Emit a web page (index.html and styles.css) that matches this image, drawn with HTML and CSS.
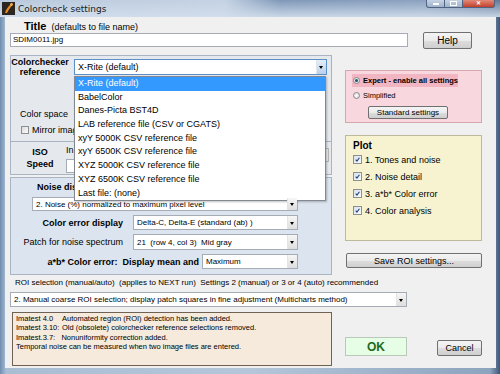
FILE: index.html
```html
<!DOCTYPE html>
<html lang="en">
<head>
    <meta charset="UTF-8">
    <title>Colorcheck settings</title>
    <link rel="stylesheet" href="styles.css">
</head>
<body>
<div class="window">
    <div class="titlebar">
        <svg class="app-icon" viewBox="0 0 13 13" width="13" height="13">
            <rect width="13" height="13" fill="#2b2620"/>
            <path d="M3 11 C4 7 6 5 9 2 L10.5 3 C8 6 6.5 8 5 11 Z" fill="#e88a2a"/>
            <circle cx="9.5" cy="2.5" r="1.4" fill="#f4b04a"/>
        </svg>
        <span class="win-title">Colorcheck settings</span>
        <div class="win-buttons">
            <span class="wbtn wbtn-min"></span>
            <span class="wbtn wbtn-max"></span>
            <span class="wbtn wbtn-close">&#x2715;</span>
        </div>
    </div>

    <div class="client">
        <div class="title-row"><b>Title</b>&nbsp; (defaults to file name)</div>
        <div class="file-row">
            <div class="text-input">SDIM0011.jpg</div>
            <div class="button help-btn">Help</div>
        </div>

        <div class="main">
            <div class="left">
                <!-- colorchecker reference + dropdown opened -->
                <div class="cc-panel">
                    <div class="cc-head">
                        <div class="cc-label">Colorchecker<br>reference</div>
                        <div class="combo combo-open cc-combo">
                            <span class="combo-text">X-Rite (default)</span>
                            <span class="combo-arrow"></span>
                        </div>
                    </div>
                    <div class="cs-label">Color space</div>
                    <div class="mirror"><span class="check-empty"></span>Mirror imag</div>
                    <div class="iso">
                        <div class="iso-label">ISO<br>Speed</div>
                        <div class="iso-in">
                            <div class="iso-in-label">In</div>
                            <div class="iso-box"></div>
                        </div>
                        <div class="iso-side"></div>
                    </div>

                    <ul class="dropdown">
                        <li class="selected">X-Rite (default)</li>
                        <li>BabelColor</li>
                        <li>Danes-Picta BST4D</li>
                        <li>LAB reference file (CSV or CGATS)</li>
                        <li>xyY 5000K CSV reference file</li>
                        <li>xyY 6500K CSV reference file</li>
                        <li>XYZ 5000K CSV reference file</li>
                        <li>XYZ 6500K CSV reference file</li>
                        <li>Last file: (none)</li>
                    </ul>
                </div>

                <div class="noise-panel">
                    <div class="nd-label">Noise disp</div>
                    <div class="combo nd-combo">
                        <span class="combo-text">2. Noise (%) normalized to maximum pixel level</span>
                        <span class="combo-arrow"></span>
                    </div>
                    <div class="field-row err-row">
                        <span class="field-label bold">Color error display</span>
                        <div class="combo wide-combo">
                            <span class="combo-text">Delta-C, Delta-E (standard (ab) )</span>
                            <span class="combo-arrow"></span>
                        </div>
                    </div>
                    <div class="field-row patch-row">
                        <span class="field-label">Patch for noise spectrum</span>
                        <div class="combo wide-combo">
                            <span class="combo-text">21&nbsp; (row 4, col 3)&nbsp; Mid gray</span>
                            <span class="combo-arrow"></span>
                        </div>
                    </div>
                    <div class="field-row ab-row">
                        <span class="field-label bold">a*b* Color error:&nbsp; Display mean and</span>
                        <div class="combo max-combo">
                            <span class="combo-text">Maximum</span>
                            <span class="combo-arrow"></span>
                        </div>
                    </div>
                </div>
            </div>

            <div class="right">
                <div class="mode-box">
                    <div class="mode-row expert"><span class="radio on"></span>Expert - enable all settings</div>
                    <div class="mode-row"><span class="radio"></span>Simplified</div>
                    <div class="button std-btn">Standard settings</div>
                </div>
                <div class="plot-box">
                    <div class="plot-title">Plot</div>
                    <div class="plot-row"><span class="check"><svg viewBox="0 0 9 9"><path d="M2.2 4.6 L3.8 6.6 L7 2.2" /></svg></span>1. Tones and noise</div>
                    <div class="plot-row"><span class="check"><svg viewBox="0 0 9 9"><path d="M2.2 4.6 L3.8 6.6 L7 2.2" /></svg></span>2. Noise detail</div>
                    <div class="plot-row"><span class="check"><svg viewBox="0 0 9 9"><path d="M2.2 4.6 L3.8 6.6 L7 2.2" /></svg></span>3. a*b* Color error</div>
                    <div class="plot-row"><span class="check"><svg viewBox="0 0 9 9"><path d="M2.2 4.6 L3.8 6.6 L7 2.2" /></svg></span>4. Color analysis</div>
                </div>
                <div class="button save-btn">Save ROI settings...</div>
            </div>
        </div>

        <div class="roi-label">ROI selection (manual/auto)  (applies to NEXT run)  Settings 2 (manual) or 3 or 4 (auto) recommended</div>
        <div class="combo roi-combo">
            <span class="combo-text">2. Manual coarse ROI selection; display patch squares in fine adjustment (Multicharts method)</span>
            <span class="combo-arrow"></span>
        </div>

        <div class="bottom">
            <div class="info">
                <div><span class="ver">Imatest 4.0</span>Automated region (ROI) detection has been added.</div>
                <div><span class="ver">Imatest 3.10:</span>Old (obsolete) colorchecker reference selections removed.</div>
                <div>Imatest.3.7:&nbsp;&nbsp; Nonuniformity correction added.</div>
                <div>Temporal noise can be measured when two image files are entered.</div>
            </div>
            <div class="ok-btn">OK</div>
            <div class="button cancel-btn">Cancel</div>
        </div>
    </div>
</div>
</body>
</html>
```

FILE: styles.css
```css
body {
    margin: 0;
    font-family: "Liberation Sans", Arial, sans-serif;
    color: #000;
}
.window {
    width: 500px;
    height: 374px;
    overflow: hidden;
    display: flex;
    flex-direction: column;
    background: linear-gradient(to right, #6f8db0 0, #a9bdd3 1.2%, #b5c6d9 50%, #8da4bf 98%, #3e5677 100%);
}
.titlebar {
    height: 17px;
    display: flex;
    align-items: center;
    position: relative;
    background:
        linear-gradient(to bottom, rgba(255,255,255,0) 0, rgba(210,222,236,0.9) 100%),
        linear-gradient(to right, #b9c9dc 0, #c4d2e3 45%, #7f98b8 56%, #8aa1bf 85%, #5f7797 100%);
}
.app-icon {
    margin-left: 2px;
    flex-shrink: 0;
}
.win-title {
    margin-left: 3px;
    font-family: "DejaVu Sans", sans-serif;
    font-size: 9px;
    color: #1a1a1a;
}
.win-buttons {
    position: absolute;
    top: 0;
    right: 5px;
    display: flex;
}
.wbtn {
    height: 8px;
    border: 1px solid #4f6380;
    border-top: none;
    box-sizing: border-box;
    background: linear-gradient(#c5d3e4, #9fb3cc);
    display: flex;
    align-items: center;
    justify-content: center;
}
.wbtn-min {
    width: 19px;
    border-radius: 0 0 0 3px;
}
.wbtn-min::after {
    content: "";
    width: 6px;
    height: 2px;
    background: #fff;
}
.wbtn-max {
    width: 18px;
    border-left: none;
}
.wbtn-max::after {
    content: "";
    width: 5px;
    height: 3px;
    border: 1px solid #fff;
}
.wbtn-close {
    width: 32px;
    border-left: none;
    border-radius: 0 0 3px 0;
    background: linear-gradient(#e28a78, #c1402b);
    color: #fff;
    font-size: 6px;
    font-weight: bold;
    line-height: 7px;
}

.client {
    margin: 0 4px 0 5px;
    height: 351px;
    background: #f0f0f0;
    font-size: 9px;
}
.title-row {
    margin: 4px 0 0 19px;
    height: 10px;
    line-height: 10px;
    font-size: 9px;
}
.title-row b {
    font-size: 11px;
}
.file-row {
    display: flex;
    margin-top: 1px;
    padding-left: 5px;
}
.text-input {
    width: 398px;
    height: 14px;
    margin-top: 1px;
    box-sizing: border-box;
    border: 1px solid #a5acb5;
    background: #fff;
    padding-left: 2px;
    font-size: 8px;
    line-height: 12px;
}
.button {
    box-sizing: border-box;
    border: 1px solid #707070;
    border-radius: 2px;
    background: linear-gradient(#f4f4f4 0, #ebebeb 50%, #dddddd 51%, #cfcfcf 100%);
    display: flex;
    align-items: center;
    justify-content: center;
}
.help-btn {
    margin-left: 15px;
    width: 49px;
    height: 17px;
    font-size: 10px;
}

.main {
    display: flex;
    margin-top: 6px;
    padding-left: 5px;
}
.left {
    width: 322px;
}
.right {
    width: 137px;
    margin-left: 13px;
}

/* dropdown-style combo box */
.combo {
    display: flex;
    box-sizing: border-box;
    border: 1px solid #a5acb5;
    background: #fff;
}
.combo-text {
    flex: 1;
    padding-left: 3px;
    white-space: nowrap;
    overflow: hidden;
    font-size: 8px;
    display: flex;
    align-items: center;
}
.combo-arrow {
    width: 9px;
    position: relative;
    background: linear-gradient(#f6f6f6, #dedede);
    border-left: 1px solid #e4e4e4;
}
.combo-arrow::after {
    content: "";
    position: absolute;
    left: 2px;
    top: 50%;
    margin-top: -1px;
    border-left: 2.5px solid transparent;
    border-right: 2.5px solid transparent;
    border-top: 3px solid #000;
}
.combo-open {
    border-color: #5a8fc8;
}
.combo-open .combo-arrow {
    background: linear-gradient(#e4eef9, #b9d1ec);
}

.cc-panel {
    position: relative;
    height: 120px;
    box-sizing: border-box;
    border: 1px solid #a9b4c3;
    background: #e5e8ed;
}
.cc-head {
    display: flex;
    margin-top: 3px;
}
.cc-label {
    width: 58px;
    margin-top: -2px;
    text-align: center;
    font-weight: bold;
    line-height: 10px;
}
.cc-combo {
    margin-left: 5px;
    width: 253px;
    height: 16px;
}
.cc-combo .combo-text {
    font-size: 9px;
}
.cs-label {
    margin-top: 32px;
    padding-left: 9px;
    line-height: 10px;
}
.mirror {
    display: flex;
    align-items: center;
    margin-top: 6px;
    padding-left: 10px;
    line-height: 10px;
}
.check-empty {
    width: 8px;
    height: 8px;
    box-sizing: border-box;
    border: 1px solid #8e8f8f;
    background: linear-gradient(135deg, #dcdcdc, #fafafa);
    margin-right: 3px;
}
.iso {
    display: flex;
    margin-top: 6px;
    border-top: 1px solid #a9b4c3;
    height: 35px;
}
.iso-label {
    width: 58px;
    margin-top: 4px;
    text-align: center;
    font-weight: bold;
    line-height: 12px;
}
.iso-in {
    margin-left: -3px;
}
.iso-in-label {
    margin-top: 3px;
    line-height: 10px;
}
.iso-box {
    margin-top: 4px;
    width: 60px;
    height: 12px;
    border: 1px solid #a5acb5;
    background: #fff;
}
.iso-side {
    margin: 6px 2px 0 auto;
    width: 24px;
    height: 12px;
    border: 1px solid #b5b5b5;
    background: #ececec;
}

.dropdown {
    position: absolute;
    left: 63px;
    top: 20px;
    width: 252px;
    margin: 0;
    padding: 0;
    list-style: none;
    box-sizing: border-box;
    border: 1px solid #828790;
    background: #fff;
    box-shadow: 1px 1px 2px rgba(0,0,0,0.25);
}
.dropdown li {
    height: 13.7px;
    line-height: 13.7px;
    padding-left: 3px;
    font-size: 9px;
    white-space: nowrap;
}
.dropdown li.selected {
    background: #3399ff;
    color: #fff;
}

.noise-panel {
    margin-top: 2px;
    height: 98px;
    box-sizing: border-box;
    border: 1px solid #a9b4c3;
    background: #dce5ef;
}
.nd-label {
    margin-top: 4px;
    padding-left: 26px;
    line-height: 10px;
    font-weight: bold;
}
.nd-combo {
    margin: 5px 0 0 21px;
    width: 266px;
    height: 14px;
}
.field-row {
    display: flex;
    justify-content: flex-end;
    align-items: center;
    padding-right: 33px;
    margin-top: 4px;
}
.field-label {
    margin-right: 10px;
}
.bold {
    font-weight: bold;
}
.wide-combo {
    width: 165px;
    height: 15px;
}
.patch-row .wide-combo {
    height: 16px;
}
.ab-row .field-label {
    margin-right: 3px;
}
.max-combo {
    width: 96px;
    height: 15px;
}

.mode-box {
    margin-top: 15px;
    height: 53px;
    box-sizing: border-box;
    border: 1px solid #d4a7b1;
    background: #f8d8de;
    padding: 3px 0 0 6px;
}
.mode-row {
    display: flex;
    align-items: center;
    height: 13px;
    font-size: 7.5px;
    white-space: nowrap;
}
.mode-row + .mode-row {
    margin-top: 3px;
    height: 11px;
}
.expert {
    width: 106px;
    background: #f2b5c2;
    font-weight: bold;
}
.radio {
    position: relative;
    flex-shrink: 0;
    width: 7px;
    height: 7px;
    box-sizing: border-box;
    margin: 0 3px 0 1px;
    border: 1px solid #8a8a8a;
    border-radius: 50%;
    background: radial-gradient(#ffffff, #d4d4d4);
}
.radio.on::after {
    content: "";
    position: absolute;
    left: 1px;
    top: 1px;
    width: 3px;
    height: 3px;
    border-radius: 50%;
    background: #1f4e72;
}
.std-btn {
    margin: 5px 0 0 16px;
    width: 80px;
    height: 13px;
    font-size: 8px;
}

.plot-box {
    margin-top: 12px;
    height: 106px;
    box-sizing: border-box;
    border: 1px solid #bdb99b;
    background: #f7f3d1;
    padding-left: 7px;
}
.plot-title {
    margin-top: 5px;
    line-height: 10px;
    font-size: 10px;
    font-weight: bold;
}
.plot-row {
    display: flex;
    align-items: center;
    height: 17px;
}
.plot-row:first-of-type {
    margin-top: 1px;
}
.check {
    width: 9px;
    height: 9px;
    box-sizing: border-box;
    border: 1px solid #8e8f8f;
    background: linear-gradient(135deg, #d7e0ec, #fbfcfe);
    margin-right: 3px;
    display: flex;
}
.check svg {
    width: 7px;
    height: 7px;
    fill: none;
    stroke: #21417a;
    stroke-width: 1.4;
}
.save-btn {
    margin: 12px 0 0 1px;
    width: 136px;
    height: 15px;
}

.roi-label {
    margin-top: 4px;
    padding-left: 10px;
    line-height: 8px;
    font-size: 8px;
    white-space: pre;
}
.roi-combo {
    margin: 5px 0 0 5px;
    width: 397px;
    height: 15px;
}

.bottom {
    display: flex;
    align-items: flex-start;
    margin-top: 5px;
}
.info {
    margin-left: 7px;
    width: 320px;
    height: 54px;
    box-sizing: border-box;
    border: 1px solid #6f6253;
    background: #f5eadc;
    padding: 1px 0 0 3px;
    font-size: 7.5px;
    line-height: 9.4px;
    white-space: nowrap;
}
.ver {
    display: inline-block;
    width: 46px;
}
.ok-btn {
    margin: 25px 0 0 13px;
    width: 62px;
    height: 19px;
    box-sizing: border-box;
    border: 1px solid #b9c9b9;
    background: #e6fde6;
    color: #1d6a1d;
    font-size: 12px;
    font-weight: bold;
    display: flex;
    align-items: center;
    justify-content: center;
}
.cancel-btn {
    margin: 28px 0 0 30px;
    width: 45px;
    height: 16px;
    font-size: 9px;
}
```
